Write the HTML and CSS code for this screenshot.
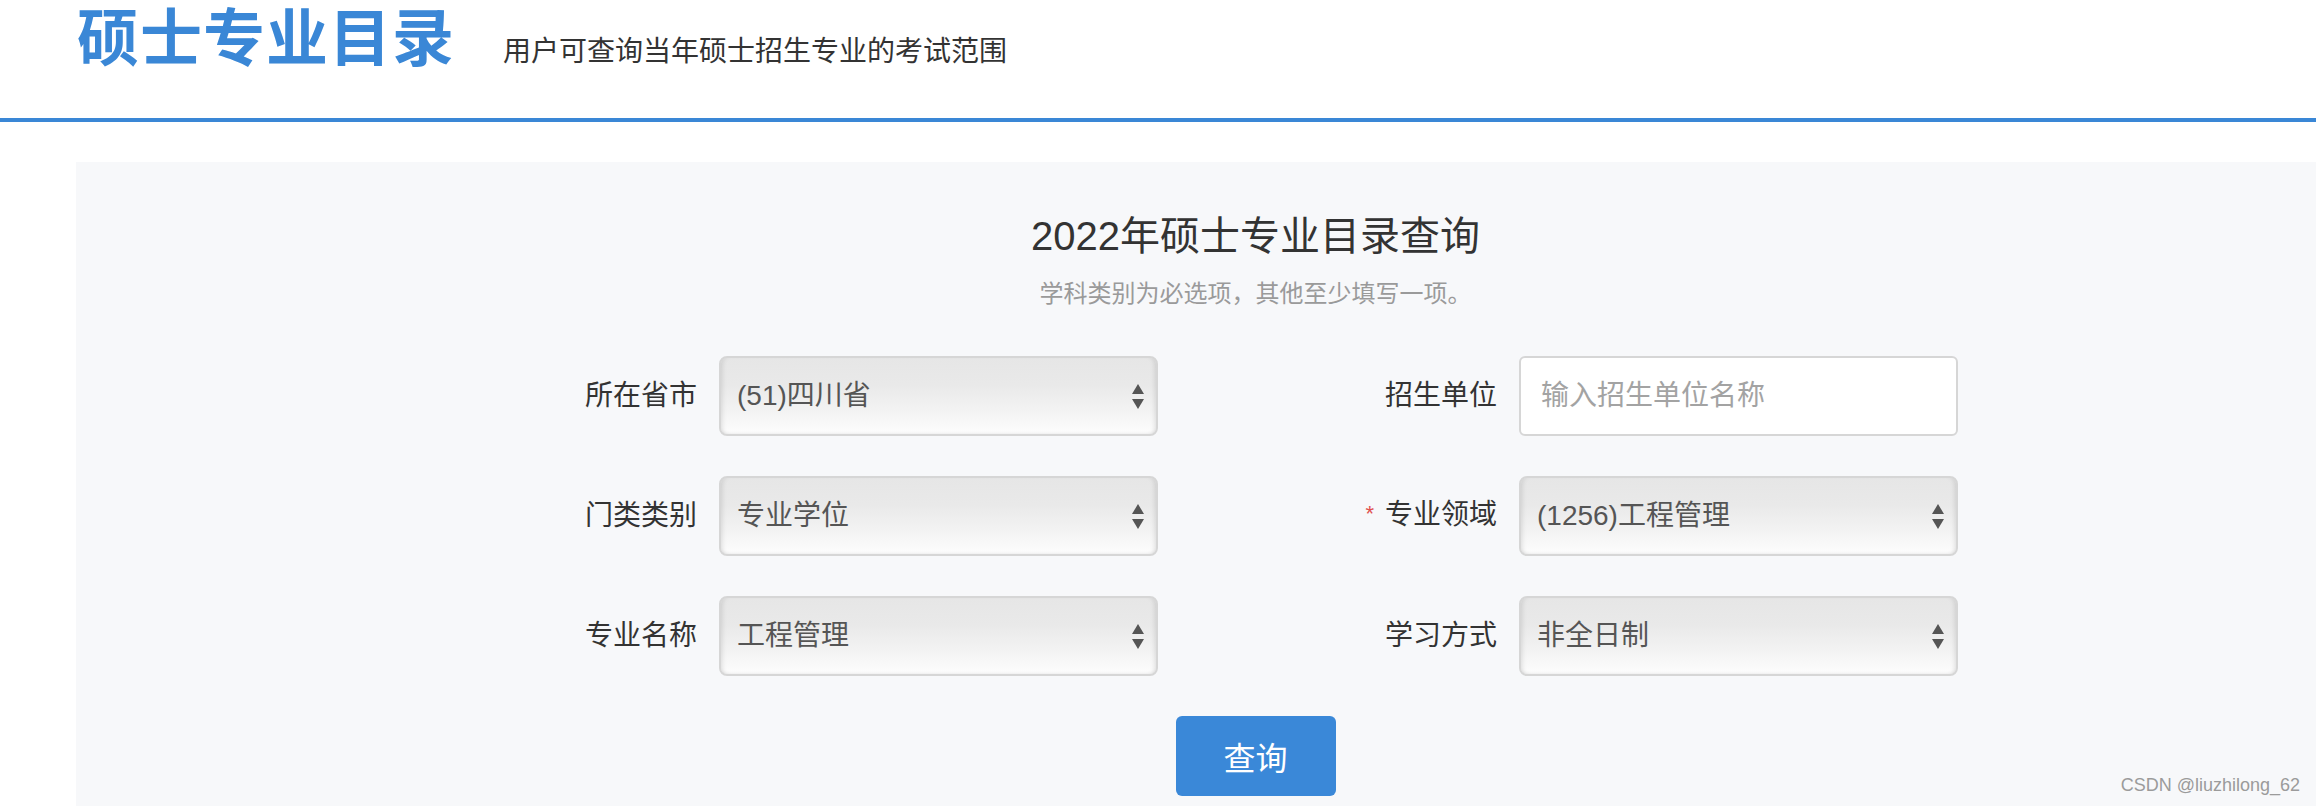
FILE: index.html
```html
<!DOCTYPE html>
<html lang="zh-CN">
<head>
<meta charset="utf-8">
<title>硕士专业目录</title>
<link rel="stylesheet" href="styles.css">
</head>
<body>
<header class="site-header">
  <h1 class="site-title">硕士专业目录</h1>
  <p class="site-desc">用户可查询当年硕士招生专业的考试范围</p>
</header>
<main class="panel">
  <h2 class="panel-title">2022年硕士专业目录查询</h2>
  <p class="panel-hint">学科类别为必选项，其他至少填写一项。</p>
  <form class="query-form">
    <div class="field">
      <label class="field-label">所在省市</label>
      <div class="select"><span class="select-value">(51)四川省</span><svg class="arrows" width="12" height="25" viewBox="0 0 12 25"><polygon points="6,0 12,10 0,10"/><polygon points="0,15 12,15 6,25"/></svg></div>
    </div>
    <div class="field">
      <label class="field-label">招生单位</label>
      <div class="input"><span class="placeholder">输入招生单位名称</span></div>
    </div>
    <div class="field">
      <label class="field-label">门类类别</label>
      <div class="select"><span class="select-value">专业学位</span><svg class="arrows" width="12" height="25" viewBox="0 0 12 25"><polygon points="6,0 12,10 0,10"/><polygon points="0,15 12,15 6,25"/></svg></div>
    </div>
    <div class="field">
      <label class="field-label"><span class="req">*</span>专业领域</label>
      <div class="select"><span class="select-value">(1256)工程管理</span><svg class="arrows" width="12" height="25" viewBox="0 0 12 25"><polygon points="6,0 12,10 0,10"/><polygon points="0,15 12,15 6,25"/></svg></div>
    </div>
    <div class="field">
      <label class="field-label">专业名称</label>
      <div class="select"><span class="select-value">工程管理</span><svg class="arrows" width="12" height="25" viewBox="0 0 12 25"><polygon points="6,0 12,10 0,10"/><polygon points="0,15 12,15 6,25"/></svg></div>
    </div>
    <div class="field">
      <label class="field-label">学习方式</label>
      <div class="select"><span class="select-value">非全日制</span><svg class="arrows" width="12" height="25" viewBox="0 0 12 25"><polygon points="6,0 12,10 0,10"/><polygon points="0,15 12,15 6,25"/></svg></div>
    </div>
  </form>
  <div class="actions"><button type="button" class="btn-query">查询</button></div>
</main>
<div class="watermark">CSDN @liuzhilong_62</div>
</body>
</html>
```
FILE: styles.css
```css
html, body {
  margin: 0;
  padding: 0;
  height: 100%;
}
body {
  background: #ffffff;
  font-family: "Liberation Sans", "Noto Sans CJK SC", sans-serif;
  color: #333333;
  overflow: hidden;
  position: relative;
}
.site-header {
  display: flex;
  align-items: baseline;
  height: 122px;
  box-sizing: border-box;
  padding: 9px 0 0 77px;
  border-bottom: 4px solid #3a87d6;
}
.site-title {
  margin: 0;
  font-size: 62px;
  line-height: 62px;
  font-weight: 700;
  letter-spacing: 1px;
  color: #3a87d6;
}
.site-desc {
  margin: 0 0 0 48px;
  font-size: 28px;
  line-height: 40px;
  color: #333333;
}
.panel {
  display: block;
  margin: 40px 0 0 76px;
  padding: 46px 0 0 119px;
  background: #f7f8fa;
  height: 598px;
}
.panel-title {
  margin: 0;
  text-align: center;
  font-size: 40px;
  line-height: 56px;
  font-weight: 400;
  color: #333333;
}
.panel-hint {
  margin: 13px 0 0;
  text-align: center;
  font-size: 24px;
  line-height: 34px;
  color: #9a9a9a;
}
.query-form {
  display: grid;
  grid-template-columns: 800px 800px;
  row-gap: 40px;
  width: 1600px;
  margin: 45px 0 0 163px;
}
.field {
  display: flex;
  align-items: center;
  height: 80px;
}
.field-label {
  width: 339px;
  margin-right: 22px;
  text-align: right;
  font-size: 28px;
  line-height: 40px;
  color: #333333;
}
.req {
  color: #e0514f;
  font-size: 22px;
  margin-right: 11px;
  position: relative;
  top: -3px;
}
.select {
  width: 439px;
  height: 80px;
  box-sizing: border-box;
  display: flex;
  align-items: center;
  justify-content: space-between;
  padding: 0 12px 0 16px;
  border: 2px solid #d6d6d6;
  border-radius: 8px;
  background: linear-gradient(to bottom, #e6e6e6 0%, #e9e9e9 35%, #f3f3f3 70%, #fdfdfd 100%);
  box-shadow: inset 5px 0 5px -4px rgba(0, 0, 0, 0.12), inset -5px 0 5px -4px rgba(0, 0, 0, 0.12), inset 0 -3px 3px -2px rgba(0, 0, 0, 0.06);
}
.select-value {
  font-size: 28px;
  line-height: 40px;
  color: #555555;
}
.arrows {
  fill: #555555;
  display: block;
}
.input {
  width: 439px;
  height: 80px;
  box-sizing: border-box;
  display: flex;
  align-items: center;
  padding: 0 20px;
  border: 2px solid #d6d6d6;
  border-radius: 6px;
  background: #ffffff;
}
.placeholder {
  font-size: 28px;
  line-height: 40px;
  color: #a3a3a3;
}
.actions {
  display: flex;
  justify-content: center;
  margin-top: 40px;
}
.btn-query {
  width: 160px;
  height: 80px;
  border: 0;
  border-radius: 6px;
  background: #3a88d8;
  color: #ffffff;
  font-family: "Liberation Sans", "Noto Sans CJK SC", sans-serif;
  font-size: 32px;
  padding: 0;
}
.watermark {
  position: absolute;
  right: 16px;
  bottom: 10px;
  font-size: 18px;
  line-height: 22px;
  color: #9b9b9b;
}
```
